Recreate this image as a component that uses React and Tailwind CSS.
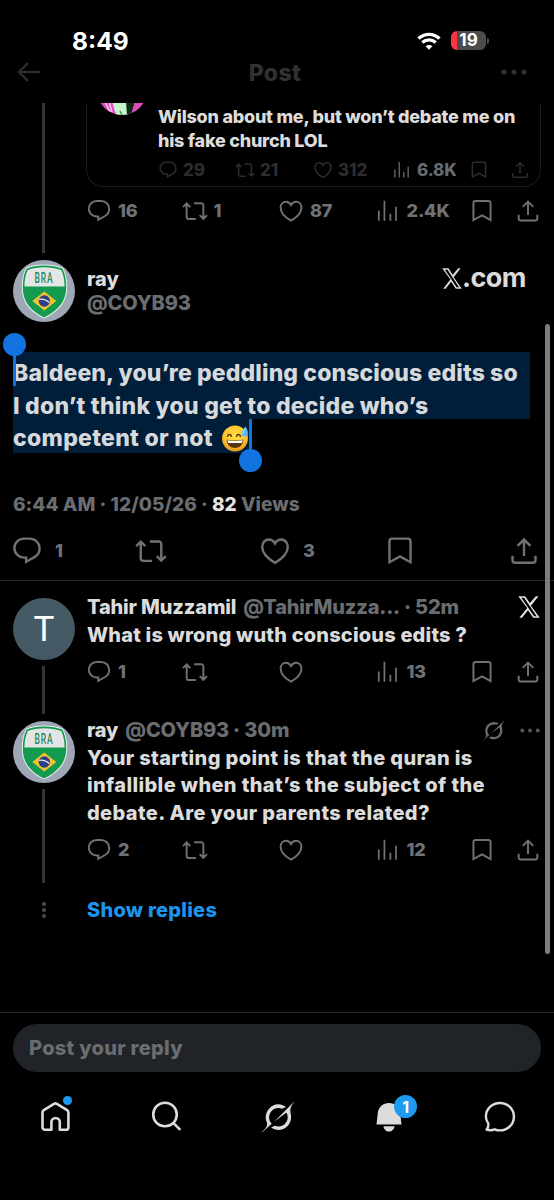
import clsx from 'clsx'

// Icons
const Stroke = ({ className, width = 1.8, children }) => (
  <svg
    viewBox="0 0 24 24"
    className={clsx('shrink-0', className)}
    fill="none"
    stroke="currentColor"
    strokeWidth={width}
  >
    {children}
  </svg>
)

const ReplyIcon = ({ className }) => (
  <Stroke className={className}>
    <path d="M9.76 2.7a7.2 7.2 0 0 0-7.2 7.2c0 4 3.3 7.2 7.33 7.1h1.45v3.1l6.3-3.5a7.3 7.3 0 0 0 3.8-6.4c0-4.2-3.3-7.5-7.4-7.5z" />
  </Stroke>
)

const RepostIcon = ({ className }) => (
  <Stroke className={className}>
    <path d="M4.3 5v12.6a1.8 1.8 0 0 0 1.8 1.8h6.7M.9 8.4l3.4-3.4 3.4 3.4M11.2 4.9h6.7a1.8 1.8 0 0 1 1.8 1.8v12.5M16.3 15.8l3.4 3.4 3.4-3.4" />
  </Stroke>
)

const HeartIcon = ({ className }) => (
  <Stroke className={className}>
    <path d="M12 20.9C6.2 17.6 2.4 13.6 2.4 8.9c0-3.2 2.2-5.5 5-5.5 2.1 0 3.6 1.1 4.6 3 1-1.9 2.5-3 4.6-3 2.8 0 5 2.3 5 5.5 0 4.7-3.8 8.7-9.6 12z" />
  </Stroke>
)

const ViewsIcon = ({ className }) => (
  <Stroke className={className} width={1.6}>
    <path d="M3.5 11.5V21M8.7 2.5V21M14.2 14.5V21M19.4 8V21" />
  </Stroke>
)

const BookmarkIcon = ({ className }) => (
  <Stroke className={className}>
    <path d="M4.1 20.4V4.5a1.8 1.8 0 0 1 1.8-1.8h12.2a1.8 1.8 0 0 1 1.8 1.8v15.9l-7.9-4.3z" />
  </Stroke>
)

const ShareIcon = ({ className }) => (
  <Stroke className={className}>
    <path d="M12 3.4V15.8M7.2 8.2L12 3.4l4.8 4.8M3.4 15.5v3.4a1.9 1.9 0 0 0 1.9 1.9h13.400a1.9 1.9 0 0 0 1.9-1.9v-3.4" />
  </Stroke>
)

const XLogo = ({ className }) => (
  <svg viewBox="1 2 22 20" preserveAspectRatio="none" className={clsx('shrink-0', className)} fill="currentColor">
    <path d="M18.9 2.25h2.6l-7.6 8.5 8.9 11h-6.6l-5.2-6.7-6 6.7H2.3l7.9-8.9L1.25 2.25H8.08l4.713 6.1zM17.083 20.35h2.6L7.084 3.6H4.3z" />
  </svg>
)

const GrokIcon = ({ className }) => (
  <svg viewBox="0 0 24 24" className={clsx('shrink-0', className)} fill="currentColor">
    <path d="M9.27 15.29l7.978-5.897c.391-.29.95-.177 1.137.272.98 2.369.542 5.215-1.41 7.169-1.951 1.954-4.667 2.382-7.149 1.406l-2.711 1.257c3.889 2.661 8.611 2.003 11.562-.953 2.341-2.344 3.066-5.539 2.388-8.42l.006.007c-.983-4.232.242-5.924 2.75-9.383.06-.082.12-.164.179-.248l-3.301 3.305v-.01L9.267 15.292M7.623 16.723c-2.792-2.67-2.31-6.801.071-9.184 1.761-1.763 4.647-2.483 7.166-1.425l2.705-1.25a7.808 7.808 0 00-1.829-1A8.975 8.975 0 005.984 5.83c-2.533 2.536-3.33 6.436-1.962 9.764 1.022 2.487-.653 4.246-2.34 6.022-.599.63-1.199 1.259-1.682 1.925l7.62-6.815" />
  </svg>
)

const DotsIcon = ({ className }) => (
  <svg viewBox="0 0 26 6" className={clsx('shrink-0', className)} fill="currentColor">
    <circle cx="3" cy="3" r="2.6" />
    <circle cx="13" cy="3" r="2.6" />
    <circle cx="23" cy="3" r="2.6" />
  </svg>
)

const SweatSmile = ({ className }) => (
  <svg viewBox="0 0 28 28" className={clsx('shrink-0', className)}>
    <defs>
      <radialGradient id="face" cx="50%" cy="40%" r="60%">
        <stop offset="0" stopColor="#ffe04d" />
        <stop offset="0.7" stopColor="#fcc52c" />
        <stop offset="1" stopColor="#e8921a" />
      </radialGradient>
    </defs>
    <circle cx="14" cy="14.5" r="13" fill="url(#face)" />
    <path d="M6.5 12.3c.5-2.3 3.4-2.3 3.9 0M15.5 12.3c.5-2.3 3.4-2.3 3.9 0" fill="none" stroke="#5b3410" strokeWidth="1.5" strokeLinecap="round" />
    <path d="M5.5 15.5c5 1.3 12 1.3 17 0-.3 5-3.8 8.5-8.5 8.5s-8.2-3.5-8.5-8.5z" fill="#5b3410" />
    <path d="M6.3 16.2c4.6 1.1 10.8 1.1 15.4 0-.2 1.3-.6 2.2-1.1 2.9H7.400c-.5-.7-.9-1.6-1.1-2.9z" fill="#fff" />
    <path d="M24.5 2.5c-2.3 2.5-4.5 5.5-3.9 7.9.9 3.1 5.8 2.8 6.3-.6.3-2.4-1-5-2.4-7.3z" fill="#5ab8ee" />
    <path d="M24 5c-1.3 2-2.3 3.9-1.9 5.2" fill="none" stroke="#c5ebff" strokeWidth="1" />
  </svg>
)

// Team crest used as ray's profile picture
const CrestAvatar = () => (
  <svg viewBox="0 0 62 62" className="size-[62px] shrink-0">
    <circle cx="31" cy="31" r="31" fill="#9da7b5" />
    <path d="M31 4.5c7 0 13 1 19 3.2 3 5.5 4.2 12 4.2 20C54.2 43 44 52.5 31 58.5 18 52.5 8.8 43 8.8 27.7c0-8 1.2-14.5 4.2-20C18 5.5 24 4.5 31 4.5z" fill="#e9efec" />
    <path d="M31 5.5c6.8 0 12.5.9 18.3 3 2.8 5.2 3.9 11.5 3.9 19.2C53.2 42.3 43.5 51.5 31 57.4 18.5 51.5 9.8 42.3 9.8 27.7c0-7.7 1.1-14 3.9-19.2C18.5 6.4 24.2 5.5 31 5.5z" fill="#129a4e" />
    <path d="M31 7.2c6.2 0 11.7.8 17.2 2.7 2.3 4.6 3.3 10.1 3.4 16.6H11.4c.1-6.5 1.1-12 3.4-16.6C19.5 8 25 7.2 31 7.2z" fill="#e4e6e6" />
    <text x="31" y="23.4" textAnchor="middle" textLength="19" lengthAdjust="spacingAndGlyphs" fontSize="14.5" fontWeight="500" letterSpacing="1.5" fontFamily="Roboto, sans-serif" fill="#26875a">
      BRA
    </text>
    <path d="M31.3 31.5L43.3 41l-12 9.5-12-9.5z" fill="#f2c230" />
    <circle cx="31.3" cy="41" r="5.7" fill="#2c3f88" />
    <path d="M26 39.3c3.7-.6 7.5.5 10.3 3.2" fill="none" stroke="#dfe6ee" strokeWidth="1.3" />
  </svg>
)

const grids = {
  quote: 'grid-cols-[77px_78px_79px_77px_41px_20px] text-[17px] h-5',
  tweet: 'grid-cols-[95.5px_96.5px_96.5px_94.5px_45.5px_26px] text-[18px] h-6 -ml-px',
}

const iconSizes = {
  quote: 'size-5',
  tweet: 'size-[26px]',
}

function Action({ icon: Icon, count, size, strong }) {
  return (
    <div className={clsx('flex items-center', size === 'quote' ? 'gap-[5px]' : 'gap-[6px]', strong && 'text-[#66696d]')}>
      <Icon className={iconSizes[size]} />
      {count && <span className="leading-none">{count}</span>}
    </div>
  )
}

function Actions({ replies, reposts, likes, views, size = 'tweet', className }) {
  return (
    <div className={clsx('grid items-center font-extrabold tracking-[-0.1px]', grids[size], className)}>
      <Action size={size} icon={ReplyIcon} count={replies} />
      <Action size={size} icon={RepostIcon} count={reposts} />
      <Action size={size} icon={HeartIcon} count={likes} />
      <Action size={size} icon={ViewsIcon} count={views} strong={size === 'quote'} />
      <Action size={size} icon={BookmarkIcon} />
      <Action size={size} icon={ShareIcon} />
    </div>
  )
}

function StatusBar() {
  return (
    <div className="flex h-[55px] items-start justify-between pl-[72px] pr-[65px] pt-[29px] text-white">
      <span className="text-[24.5px] font-bold leading-6">8:49</span>
      <div className="flex items-center gap-[10px] pt-[2px]">
        <svg viewBox="0 0 24 18" className="h-[18px] w-6" fill="none" stroke="#fff" strokeWidth="3.4">
          <path d="M1.5 6.6c6-5.7 15-5.7 21 0M5.3 10.6c3.9-3.6 9.5-3.6 13.4 0" />
          <path d="M12 17.8L8.6 14.3c2-1.7 4.8-1.7 6.8 0z" fill="#fff" stroke="none" />
        </svg>
        <div className="flex items-center gap-[1px]">
          <div className="flex h-[19px] w-[35px] items-center justify-center overflow-hidden rounded-[6px] bg-linear-to-r from-[#fb3640] from-18% to-[#4b4b4b] to-18% text-[17px] font-bold leading-none">
            19
          </div>
          <div className="h-[6px] w-[2px] rounded-r bg-[#4b4b4b]" />
        </div>
      </div>
    </div>
  )
}

function Header() {
  return (
    <div className="flex h-12 items-start justify-between pl-[17px] pr-[27px] text-[#303030]">
      <svg viewBox="0 0 24 20" className="mt-[7px] h-5 w-6" fill="none" stroke="currentColor" strokeWidth="2.2">
        <path d="M23 10H2M11 1L2 10l9 9" />
      </svg>
      <span className="pl-[8px] pt-[4px] text-[23px] font-extrabold leading-7 tracking-[0.4px]">Post</span>
      <DotsIcon className="mt-[14px] h-[6px] w-[26px]" />
    </div>
  )
}

function QuotedTweet() {
  return (
    <div className="-ml-px flex h-[84px] w-[455px] overflow-hidden rounded-b-[17px] border border-t-0 border-[#1b1c1e] pl-[10px]">
      <svg viewBox="0 0 50 50" className="-mt-[38px] size-[50px] shrink-0">
        <clipPath id="round">
          <circle cx="25" cy="25" r="25" />
        </clipPath>
        <g clipPath="url(#round)">
          <path d="M0 0h50v50H0z" fill="#e04cc0" />
          <path d="M15 36l4 14h14l-3-14z" fill="#c4f5cb" />
          <path d="M29 36h9l-4 14h-4z" fill="#0a2a12" />
          <path d="M8 37l5 10M12 37l3 10" stroke="#fbc4ef" strokeWidth="1.5" />
          <path d="M23 46l2 4" stroke="#3f9c5b" strokeWidth="1.5" />
        </g>
      </svg>
      <div className="pl-[11px] pt-[2px]">
        <p className="whitespace-nowrap text-[18px] font-extrabold leading-[23.5px] tracking-[-0.24px] text-[#dcdcdc]">
          Wilson about me, but won’t debate me on
          <br />
          his fake church LOL
        </p>
        <Actions size="quote" replies="29" reposts="21" likes="312" views="6.8K" className="mt-2 text-[#2c2d2f]" />
      </div>
    </div>
  )
}

function ThreadLine({ className }) {
  return <div className={clsx('w-[3px] bg-[#333537]', className)} />
}

function ParentTweet() {
  return (
    <div className="flex h-[157px] pl-[12px]">
      <div className="flex w-[63px] justify-center">
        <ThreadLine className="h-[150px]" />
      </div>
      <div className="pl-3">
        <QuotedTweet />
        <Actions replies="16" reposts="1" likes="87" views="2.4K" className="mt-[11px] text-[#6e7276]" />
      </div>
    </div>
  )
}

function SelectedText() {
  return (
    <div className="relative ml-[13px] mt-[30px] text-[23px] font-extrabold text-[#d6d9dc]">
      <p className="h-[33.5px] w-[517px] whitespace-nowrap bg-[#001e39] pt-[5px] leading-[32px] tracking-[0.12px]">
        Baldeen, you’re peddling conscious edits so
      </p>
      <p className="h-[33.5px] w-[517px] whitespace-nowrap bg-[#001e39] pt-1 leading-[33px] tracking-[0.23px]">
        I don’t think you get to decide who’s
      </p>
      <p className="flex h-[33.5px] w-[238px] items-center justify-between whitespace-nowrap bg-[#001e39] pr-[2px] pt-[5px] leading-[33px] tracking-[0.3px]">
        competent or not
        <SweatSmile className="size-7" />
      </p>
      {/* Selection handles */}
      <div className="absolute left-0 top-0 h-[34px] w-[2.5px] bg-[#1272e0]" />
      <div className="absolute -left-[10.5px] -top-[19px] size-[23px] rounded-full bg-[#1272e0]" />
      <div className="absolute left-[236px] top-[67px] h-[34px] w-[3px] bg-[#1272e0]" />
      <div className="absolute left-[226px] top-[97px] size-[23px] rounded-full bg-[#1272e0]" />
    </div>
  )
}

function MainTweet() {
  return (
    <div className="h-[321px] border-b border-[#232426]">
      <div className="flex pl-[13px]">
        <CrestAvatar />
        <div className="flex flex-col pl-[12px] pt-[7px] text-[20px] font-extrabold leading-[24px]">
          <span className="text-[#dcdcdc]">ray</span>
          <span className="tracking-[-0.15px] text-[#6a6d70]">@COYB93</span>
        </div>
        <div className="ml-auto mr-[28px] mt-[4px] flex h-7 items-center text-[#dcdcdc]">
          <XLogo className="h-[21px] w-5" />
          <span className="text-[27px] font-bold leading-7 tracking-[-0.5px]">.com</span>
        </div>
      </div>
      <SelectedText />
      <p className="ml-[13px] mt-[38px] whitespace-nowrap text-[19px] font-extrabold leading-7 tracking-[0.04px] text-[#6a6d70]">
        6:44 AM · 12/05/26 · <span className="text-[#e4e4e4]">82</span> Views
      </p>
      <div className="ml-[11px] mt-[16px] grid h-8 grid-cols-[124px_124px_124.5px_124.5px_32px] items-center text-[18px] font-extrabold text-[#6e7276]">
        <div className="flex items-center gap-3">
          <ReplyIcon className="size-8" />
          <span>1</span>
        </div>
        <RepostIcon className="size-8" />
        <div className="flex items-center gap-[12px]">
          <HeartIcon className="size-8" />
          <span>3</span>
        </div>
        <BookmarkIcon className="size-8" />
        <ShareIcon className="size-8" />
      </div>
    </div>
  )
}

function Reply({ avatar, name, handle, time, aside, lines, lineClass, textClass, ...stats }) {
  return (
    <div className="flex pl-[13px]">
      <div className="flex w-[62px] shrink-0 flex-col items-center gap-[6px]">
        {avatar}
        <ThreadLine className={clsx('-ml-px', lineClass)} />
      </div>
      <div className="w-[468px] pl-3 -mt-[5px]">
        <div className="flex h-7 items-center text-[20px] font-extrabold tracking-[-0.15px] text-[#6a6d70]">
          <span className="text-[#dcdcdc]">{name}</span>
          <span className="ml-[7px]">{handle}</span>
          <span className="ml-1">· {time}</span>
          <div className="ml-auto flex items-center">{aside}</div>
        </div>
        <div className={clsx('pt-px text-[20px] font-extrabold leading-[27.3px] text-[#dcdcdc]', textClass)}>
          {lines.map((line) => (
            <p key={line} className="whitespace-nowrap">
              {line}
            </p>
          ))}
        </div>
        <Actions {...stats} className="mt-[10px] text-[#6e7276]" />
      </div>
    </div>
  )
}

function Replies() {
  return (
    <div className="pt-[17px]">
      <div className="h-[123px]">
        <Reply
          avatar={
            <div className="flex size-[62px] items-center justify-center rounded-full bg-[#465a65] pt-[2px] font-['Roboto',sans-serif] text-[35px] text-white">
              T
            </div>
          }
          name="Tahir Muzzamil"
          handle="@TahirMuzza..."
          time="52m"
          aside={<XLogo className="mr-[3px] size-[22px] text-[#e4e4e4]" />}
          lines={['What is wrong wuth conscious edits ?']}
          lineClass="h-12"
          textClass="tracking-[0.18px]"
          replies="1"
          views="13"
        />
      </div>
      <Reply
        avatar={<CrestAvatar />}
        name="ray"
        handle="@COYB93"
        time="30m"
        aside={
          <>
            <GrokIcon className="mr-[15px] size-[23px]" />
            <DotsIcon className="mr-[3px] h-[5px] w-5 text-[#55585b]" />
          </>
        }
        lines={[
          'Your starting point is that the quran is',
          'infallible when that’s the subject of the',
          'debate. Are your parents related?',
        ]}
        lineClass="h-[94px]"
        textClass="tracking-[0.37px]"
        replies="2"
        views="12"
      />
      <div className="mt-[13px] flex h-7 items-center pl-[42px]">
        <div className="flex w-[45px] flex-col gap-[2px]">
          <i className="size-1 rounded-full bg-[#4a4c4f]" />
          <i className="size-1 rounded-full bg-[#4a4c4f]" />
          <i className="size-1 rounded-full bg-[#4a4c4f]" />
        </div>
        <span className="text-[20px] font-extrabold tracking-[0.25px] text-[#1d95ec]">Show replies</span>
      </div>
    </div>
  )
}

function TabBar() {
  return (
    <div className="flex h-[94px] justify-between pl-[39px] pr-[38px] pt-[28px] text-[#dcdcdc]">
      <div className="relative size-8">
        <svg viewBox="0 0 32 32" className="size-8" fill="none" stroke="currentColor" strokeWidth="2.6" strokeLinejoin="round">
          <path d="M3.5 12.5c0-1 .5-1.8 1.3-2.3L15 3.900c.9-.6 2-.6 2.9 0l10.2 6.3c.8.5 1.3 1.3 1.3 2.3v14.700a2.6 2.6 0 0 1-2.6 2.600h-6v-7.600a4.200 4.200 0 0 0-8.400 0v7.600h-6.300a2.600 2.600 0 0 1-2.600-2.600z" />
        </svg>
        <div className="absolute -top-[4px] left-6 size-[9px] rounded-full bg-[#1d9bf0]" />
      </div>
      <svg viewBox="0 0 32 32" className="size-8" fill="none" stroke="currentColor" strokeWidth="2.6">
        <circle cx="15" cy="14.5" r="11.8" />
        <path d="M23.300 22.800l7 7" />
      </svg>
      <GrokIcon className="size-[34px]" />
      <div className="relative size-8">
        <svg viewBox="0 0 32 32" className="size-8" fill="currentColor">
          <path d="M3.500 24.500L4.800 13C5.500 7 10 3 16 3s10.500 4 11.200 10l1.300 11.500zM10.500 26.200h11c-.4 3.200-2.600 5.300-5.500 5.300s-5.100-2.100-5.500-5.300z" />
        </svg>
        <div className="absolute -top-[5px] left-[21px] flex size-[23px] items-center justify-center rounded-full bg-[#1d9bf0] text-[16px] font-bold leading-none text-white">
          1
        </div>
      </div>
      <svg viewBox="0 0 32 32" className="size-8" fill="none" stroke="currentColor" strokeWidth="2.4" strokeLinejoin="round">
        <path d="M4.200 23.200C2.600 21.200 1.900 18.900 1.900 16.500 1.900 9 8.100 3 15.900 3s14 6 14 13.700-6.200 13.700-14 13.700c-1.900 0-3.700-.4-5.300-1.100-2.600 1.200-5 1.300-8 .2 1.500-1.700 2.100-3.700 1.600-6.300z" />
      </svg>
    </div>
  )
}

export default function App() {
  return (
    <div className="relative flex h-[1200px] w-[554px] flex-col overflow-hidden bg-black font-['Inter',sans-serif]">
      <StatusBar />
      <Header />
      <main className="h-[909px] overflow-hidden">
        <ParentTweet />
        <MainTweet />
        <Replies />
      </main>
      <div className="border-t border-[#232426] px-[13px] pt-[11px]">
        <div className="flex h-12 items-center rounded-full bg-[#202327] pl-[16px] text-[20px] font-extrabold tracking-[0.3px] text-[#6a6d70]">
          Post your reply
        </div>
      </div>
      <TabBar />
      {/* Scroll indicator */}
      <div className="absolute left-[545px] top-[324px] h-[630px] w-[5px] rounded-full bg-[#7c7c7c]" />
    </div>
  )
}
